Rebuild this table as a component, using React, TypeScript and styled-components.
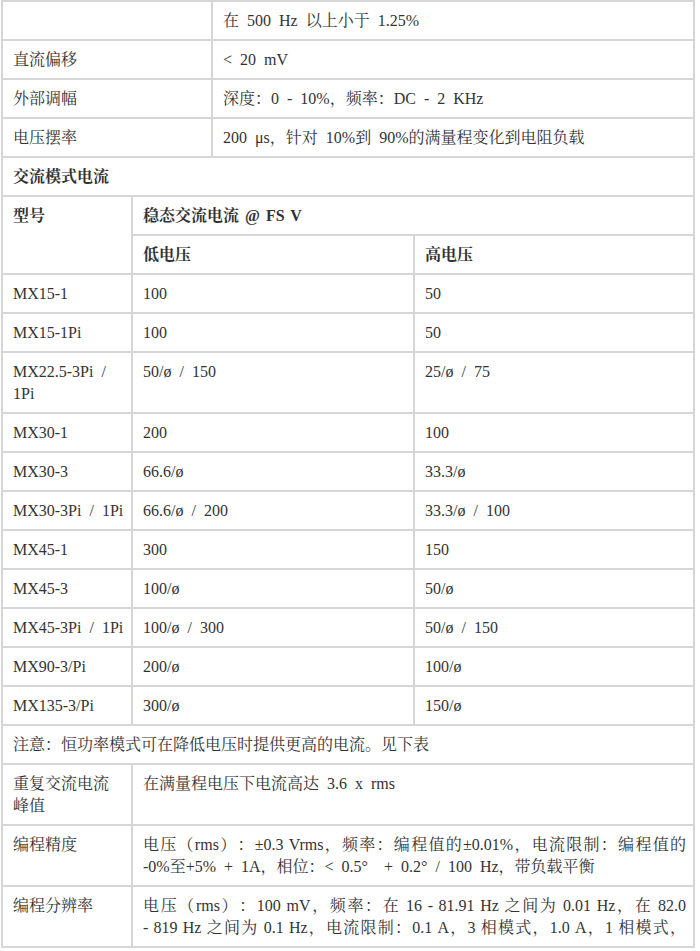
import React from "react";
import styled, { createGlobalStyle } from "styled-components";

const GlobalStyle = createGlobalStyle`
  html, body {
    margin: 0;
    padding: 0;
    background: #ffffff;
  }
  body {
    font-family: "Liberation Serif", "Noto Serif CJK SC", "Noto Sans CJK SC", serif;
    color: #333333;
    text-spacing-trim: space-all;
  }
`;

const Page = styled.div`
  padding: 0 2px 0 1px;
  width: 697px;
  box-sizing: border-box;
`;

const Table = styled.table<{ $joined?: boolean }>`
  width: 100%;
  border-collapse: collapse;
  table-layout: fixed;
  font-size: 16px;
  line-height: 22px;
  word-spacing: 4px;

  ${(p) =>
    p.$joined &&
    `
    & > tbody > tr:first-child > td {
      border-top: none;
    }
  `}
`;

const Col = styled.col<{ $w?: number }>`
  width: ${(p) => (p.$w ? `${p.$w}px` : "auto")};
`;

const Cell = styled.td<{ $bold?: boolean }>`
  border: 2px solid #d6d6d6;
  padding: 8px 7px 7px 10px;
  vertical-align: top;
  text-align: left;
  font-weight: ${(p) => (p.$bold ? 700 : 400)};
  word-spacing: ${(p) => (p.$bold ? "2px" : "4px")};
`;

const Line = styled.span<{ $justify?: boolean }>`
  display: block;
  text-align: ${(p) => (p.$justify ? "justify" : "left")};
  text-align-last: ${(p) => (p.$justify ? "justify" : "left")};
  word-spacing: ${(p) => (p.$justify ? "0" : "4px")};
`;

type Row = [string, string];

const topRows: Row[] = [
  ["", "在 500 Hz 以上小于 1.25%"],
  ["直流偏移", "< 20 mV"],
  ["外部调幅", "深度：0 - 10%，频率：DC - 2 KHz"],
  ["电压摆率", "200 μs，针对 10%到 90%的满量程变化到电阻负载"],
];

const currentRows: [string, string, string][] = [
  ["MX15-1", "100", "50"],
  ["MX15-1Pi", "100", "50"],
  ["MX22.5-3Pi / 1Pi", "50/ø / 150", "25/ø / 75"],
  ["MX30-1", "200", "100"],
  ["MX30-3", "66.6/ø", "33.3/ø"],
  ["MX30-3Pi / 1Pi", "66.6/ø / 200", "33.3/ø / 100"],
  ["MX45-1", "300", "150"],
  ["MX45-3", "100/ø", "50/ø"],
  ["MX45-3Pi / 1Pi", "100/ø / 300", "50/ø / 150"],
  ["MX90-3/Pi", "200/ø", "100/ø"],
  ["MX135-3/Pi", "300/ø", "150/ø"],
];

export default function App() {
  return (
    <>
      <GlobalStyle />
      <Page>
        <Table>
          <colgroup>
            <Col $w={210} />
            <Col />
          </colgroup>
          <tbody>
            {topRows.map(([k, v], i) => (
              <tr key={i}>
                <Cell>{k}</Cell>
                <Cell>{v}</Cell>
              </tr>
            ))}
            <tr>
              <Cell colSpan={2} $bold>
                交流模式电流
              </Cell>
            </tr>
          </tbody>
        </Table>
        <Table $joined>
          <colgroup>
            <Col $w={130} />
            <Col $w={282} />
            <Col />
          </colgroup>
          <tbody>
            <tr>
              <Cell rowSpan={2} $bold>
                型号
              </Cell>
              <Cell colSpan={2} $bold>
                稳态交流电流 @ FS V
              </Cell>
            </tr>
            <tr>
              <Cell $bold>低电压</Cell>
              <Cell $bold>高电压</Cell>
            </tr>
            {currentRows.map(([m, lo, hi]) => (
              <tr key={m}>
                <Cell>{m}</Cell>
                <Cell>{lo}</Cell>
                <Cell>{hi}</Cell>
              </tr>
            ))}
            <tr>
              <Cell colSpan={3}>注意：恒功率模式可在降低电压时提供更高的电流。见下表</Cell>
            </tr>
            <tr>
              <Cell>重复交流电流峰值</Cell>
              <Cell colSpan={2}>在满量程电压下电流高达 3.6 x rms</Cell>
            </tr>
            <tr>
              <Cell>编程精度</Cell>
              <Cell colSpan={2}>
                <Line $justify>电压（rms）：±0.3 Vrms，频率：编程值的±0.01%，电流限制：编程值的</Line>
                <Line>-0%至+5% + 1A，相位：&lt; 0.5°&nbsp; + 0.2° / 100 Hz，带负载平衡</Line>
              </Cell>
            </tr>
            <tr>
              <Cell>编程分辨率</Cell>
              <Cell colSpan={2}>
                <Line $justify>电压（rms）：100 mV，频率：在 16 - 81.91 Hz 之间为 0.01 Hz，在 82.0</Line>
                <Line $justify>- 819 Hz 之间为 0.1 Hz，电流限制：0.1 A，3 相模式，1.0 A，1 相模式，</Line>
              </Cell>
            </tr>
          </tbody>
        </Table>
      </Page>
    </>
  );
}
